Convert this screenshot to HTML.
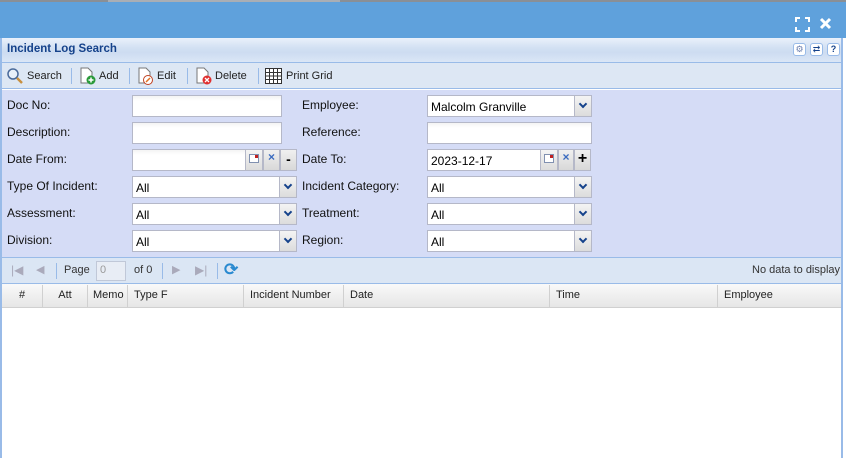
<!DOCTYPE html>
<html><head><style>
*{box-sizing:border-box;margin:0;padding:0}
body{width:846px;height:458px;overflow:hidden;background:#fff;font-family:"Liberation Sans",sans-serif;font-size:12px;position:relative;color:#000}
.a{position:absolute}
.lbl{position:absolute;font-size:12px;color:#111}
.inp{position:absolute;height:22px;background:linear-gradient(#f4f4f4,#fff 5px);border:1px solid #b5b8c8;font-size:12px;padding:4px 0 0 3px}
.dd{position:absolute;right:0;top:0;width:17px;height:20px;background:linear-gradient(#f4f4f4,#dcdcdc);border-left:1px solid #b5b8c8}
.dd:after{content:"";position:absolute;left:5px;top:5px;width:4px;height:4px;border-right:2px solid #15428b;border-bottom:2px solid #15428b;transform:rotate(45deg)}
.btn{position:absolute;height:22px;background:linear-gradient(#f0f0f0,#d8d8d8);border:1px solid #b5b8c8;text-align:center;font-weight:bold}
.sep{position:absolute;width:1px;height:16px;background:#99bbe8}
.tb{position:absolute;top:70px;font-size:11px;color:#222}
.th{position:absolute;top:285px;height:22px;border-right:1px solid #d0d0d0;padding:4px 0 0 6px;font-size:11px;color:#222}
</style></head><body>
<div class="a" style="left:0;top:0;width:846px;height:2px;background:#8a8f96"></div>
<div class="a" style="left:108px;top:0;width:232px;height:2px;background:#a9aeb5"></div>
<div class="a" style="left:0;top:2px;width:846px;height:36px;background:#5fa1dc"></div>
<svg class="a" style="left:795px;top:17px" width="15" height="15"><path d="M1 5V1H5M10 1H14V5M14 10V14H10M5 14H1V10" stroke="#fff" stroke-width="2" fill="none"/></svg>
<svg class="a" style="left:819px;top:17px" width="13" height="13"><path d="M2 2L11 11M11 2L2 11" stroke="#fff" stroke-width="3"/></svg>
<div class="a" style="left:0;top:38px;width:843px;height:420px;border-left:2px solid #99bbe8;border-right:2px solid #99bbe8"></div>
<div class="a" style="left:2px;top:38px;width:839px;height:25px;background:linear-gradient(#eaf1fb,#d3e1f3 40%,#cddcf1 60%,#dae6f6);border-bottom:1px solid #99bbe8"></div>
<div class="a" style="left:7px;top:43px;font-weight:bold;color:#15428b;font-size:11.5px">Incident Log Search</div>
<div class="a" style="left:793px;top:43px;width:13px;height:13px;border:1px solid #99bbe8;border-radius:3px;background:#fff;color:#6b7fb0;font-size:9px;text-align:center;line-height:11px">⚙</div>
<div class="a" style="left:810px;top:43px;width:13px;height:13px;border:1px solid #99bbe8;border-radius:3px;background:#fff;color:#15428b;font-size:9px;text-align:center;line-height:11px">⇄</div>
<div class="a" style="left:827px;top:43px;width:13px;height:13px;border:1px solid #99bbe8;border-radius:3px;background:#fff;color:#15428b;font-size:9px;font-weight:bold;text-align:center;line-height:11px">?</div>
<div class="a" style="left:2px;top:63px;width:839px;height:26px;background:#dde7f4;border-bottom:1px solid #99bbe8"></div>
<svg class="a" style="left:6px;top:67px" width="18" height="18"><circle cx="7" cy="7" r="5" stroke="#4a6a9a" stroke-width="1.5" fill="#e8f0fa"/><path d="M11 11L16 16" stroke="#c89040" stroke-width="2.5"/></svg>
<div class="tb" style="left:27px">Search</div>
<div class="sep" style="left:71px;top:68px"></div>
<svg class="a" style="left:79px;top:67px" width="18" height="18"><path d="M2 1H9L13 5V16H2Z" fill="#fff" stroke="#777"/><circle cx="12" cy="13" r="4.5" fill="#2a9a3a"/><path d="M12 10.5V15.5M9.5 13H14.5" stroke="#fff" stroke-width="1.5"/></svg>
<div class="tb" style="left:99px">Add</div>
<div class="sep" style="left:129px;top:68px"></div>
<svg class="a" style="left:137px;top:67px" width="18" height="18"><path d="M2 1H9L13 5V16H2Z" fill="#fff" stroke="#777"/><circle cx="11" cy="13" r="4.5" fill="#fff" stroke="#c04020"/><path d="M9 15L13 11" stroke="#e07020" stroke-width="1.5"/></svg>
<div class="tb" style="left:157px">Edit</div>
<div class="sep" style="left:187px;top:68px"></div>
<svg class="a" style="left:195px;top:67px" width="18" height="18"><path d="M2 1H9L13 5V16H2Z" fill="#fff" stroke="#777"/><circle cx="12" cy="13" r="4.5" fill="#e03030"/><path d="M10 11L14 15M14 11L10 15" stroke="#fff" stroke-width="1.3"/></svg>
<div class="tb" style="left:215px">Delete</div>
<div class="sep" style="left:258px;top:68px"></div>
<svg class="a" style="left:265px;top:68px" width="17" height="16"><rect x="0.5" y="0.5" width="16" height="15" fill="#fff" stroke="#333"/><path d="M0 4.5H17M0 8H17M0 11.5H17M4.5 0V16M8.5 0V16M12.5 0V16" stroke="#333"/></svg>
<div class="tb" style="left:286px">Print Grid</div>
<div class="a" style="left:2px;top:90px;width:839px;height:167px;background:#d5dcf6"></div>

<div class="lbl" style="left:7px;top:98px">Doc No:</div>
<div class="inp" style="left:132px;top:95px;width:150px"></div>
<div class="lbl" style="left:302px;top:98px">Employee:</div>
<div class="inp" style="left:427px;top:95px;width:165px;background:#fff">Malcolm Granville<div class="dd"></div></div>

<div class="lbl" style="left:7px;top:125px">Description:</div>
<div class="inp" style="left:132px;top:122px;width:150px"></div>
<div class="lbl" style="left:302px;top:125px">Reference:</div>
<div class="inp" style="left:427px;top:122px;width:165px"></div>

<div class="lbl" style="left:7px;top:152px">Date From:</div>
<div class="inp" style="left:132px;top:149px;width:131px"><div class="dd" style="width:17px"></div></div>
<div class="a" style="left:249px;top:154px;width:10px;height:9px;border:1px solid #8090b0;background:#fff"><div style="position:absolute;right:0;top:0;width:3px;height:3px;background:#c02020"></div></div>
<div class="btn" style="left:263px;top:149px;width:17px;color:#3a6bc0">×</div>
<div class="btn" style="left:280px;top:149px;width:17px;font-size:14px;line-height:18px">-</div>
<div class="lbl" style="left:302px;top:152px">Date To:</div>
<div class="inp" style="left:427px;top:149px;width:131px;background:#fff">2023-12-17<div class="dd"></div></div>
<div class="a" style="left:544px;top:154px;width:10px;height:9px;border:1px solid #8090b0;background:#fff"><div style="position:absolute;right:0;top:0;width:3px;height:3px;background:#c02020"></div></div>
<div class="btn" style="left:558px;top:149px;width:16px;color:#3a6bc0">×</div>
<div class="btn" style="left:574px;top:149px;width:17px;font-size:16px;line-height:18px">+</div>

<div class="lbl" style="left:7px;top:179px">Type Of Incident:</div>
<div class="inp" style="left:132px;top:176px;width:165px;background:#fff">All<div class="dd"></div></div>
<div class="lbl" style="left:302px;top:179px">Incident Category:</div>
<div class="inp" style="left:427px;top:176px;width:165px;background:#fff">All<div class="dd"></div></div>

<div class="lbl" style="left:7px;top:206px">Assessment:</div>
<div class="inp" style="left:132px;top:203px;width:165px;background:#fff">All<div class="dd"></div></div>
<div class="lbl" style="left:302px;top:206px">Treatment:</div>
<div class="inp" style="left:427px;top:203px;width:165px;background:#fff">All<div class="dd"></div></div>

<div class="lbl" style="left:7px;top:233px">Division:</div>
<div class="inp" style="left:132px;top:230px;width:165px;background:#fff">All<div class="dd"></div></div>
<div class="lbl" style="left:302px;top:233px">Region:</div>
<div class="inp" style="left:427px;top:230px;width:165px;background:#fff">All<div class="dd"></div></div>

<div class="a" style="left:2px;top:257px;width:839px;height:27px;background:#dbe6f4;border-top:1px solid #99bbe8;border-bottom:1px solid #99bbe8"></div>
<div class="a" style="left:11px;top:263px;color:#aab;font-size:12px">|◀</div>
<div class="a" style="left:36px;top:263px;color:#aab;font-size:11px">◀</div>
<div class="sep" style="left:56px;top:263px"></div>
<div class="a" style="left:64px;top:264px;font-size:11px;color:#333">Page</div>
<div class="a" style="left:96px;top:261px;width:30px;height:20px;border:1px solid #c0c8d8;background:#e8edf5;color:#999;padding:2px 0 0 3px;font-size:11px">0</div>
<div class="a" style="left:134px;top:264px;font-size:11px;color:#333">of 0</div>
<div class="sep" style="left:162px;top:263px"></div>
<div class="a" style="left:172px;top:263px;color:#aab;font-size:11px">▶</div>
<div class="a" style="left:195px;top:263px;color:#aab;font-size:12px">▶|</div>
<div class="sep" style="left:217px;top:263px"></div>
<div class="a" style="left:224px;top:260px;color:#2a8ad0;font-size:17px;font-weight:bold">⟳</div>
<div class="a" style="left:752px;top:264px;font-size:11px;color:#333">No data to display</div>

<div class="a" style="left:2px;top:284px;width:839px;height:24px;background:linear-gradient(#f9f9f9,#e6e6e6);border-bottom:1px solid #d0d0d0"></div>
<div class="th" style="left:2px;width:41px;text-align:center;padding-left:0">#</div>
<div class="th" style="left:43px;width:45px;text-align:center;padding-left:0">Att</div>
<div class="th" style="left:88px;width:40px;padding-left:5px">Memo</div>
<div class="th" style="left:128px;width:116px">Type F</div>
<div class="th" style="left:244px;width:100px">Incident Number</div>
<div class="th" style="left:344px;width:206px">Date</div>
<div class="th" style="left:550px;width:168px">Time</div>
<div class="th" style="left:718px;width:123px;border-right:none">Employee</div>
</body></html>
